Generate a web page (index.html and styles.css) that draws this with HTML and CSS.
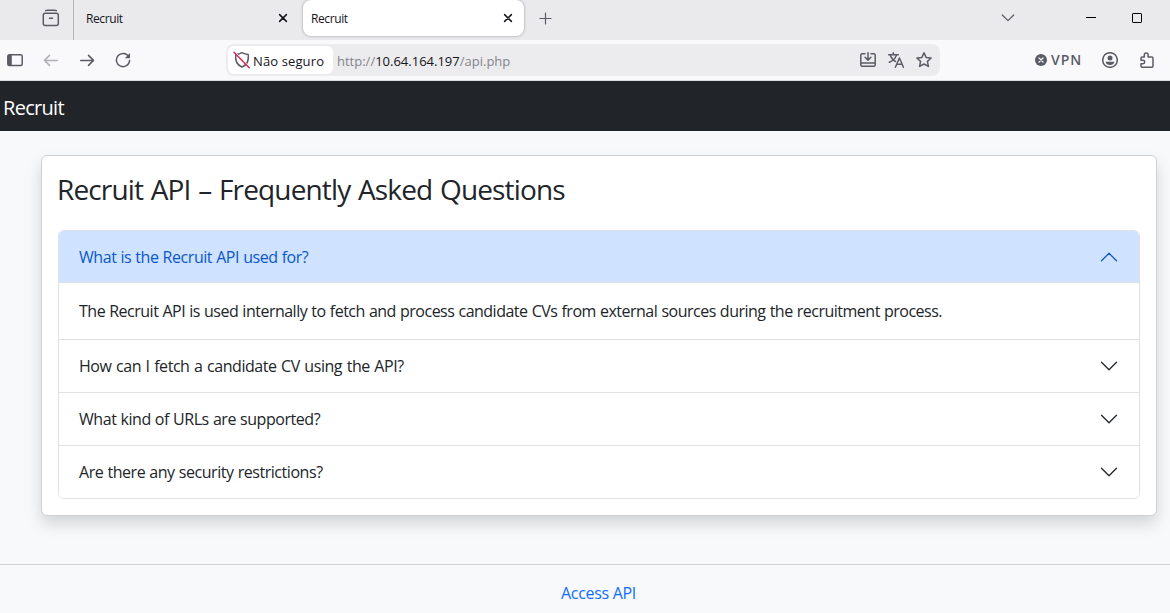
FILE: index.html
```html
<!DOCTYPE html>
<html lang="en">
<head>
    <meta charset="UTF-8">
    <meta name="viewport" content="width=device-width, initial-scale=1.0">
    <title>Recruit</title>
    <link rel="stylesheet" href="styles.css">
</head>
<body>
    <!-- tabs -->
    <div class="tabbar">
        <div class="tab-start">
            <svg class="icon" width="18" height="18" viewBox="0 0 18 18"><path d="M3.7 1.7Q4.5 1.2 5.5 1.2h7q1 0 1.8.5"/><rect x="1.3" y="4.2" width="15" height="12.3" rx="2"/><path d="M7.500 9.2h3"/></svg>
        </div>
        <div class="tab">
            <span class="tab-title">Recruit</span>
            <svg class="icon close" width="10" height="10" viewBox="0 0 10 10"><path d="M1.600 1.600l6.800 6.800M8.400 1.600L1.600 8.400"/></svg>
        </div>
        <div class="tab active">
            <span class="tab-title">Recruit</span>
            <svg class="icon close" width="10" height="10" viewBox="0 0 10 10"><path d="M1.600 1.600l6.800 6.800M8.400 1.600L1.600 8.400"/></svg>
        </div>
        <svg class="icon thin new-tab" width="13" height="13" viewBox="0 0 13 13"><path d="M6.5 1v11M1 6.5h11"/></svg>
        <div class="window-buttons">
            <svg class="icon thin" width="14" height="8" viewBox="0 0 14 8"><path d="M1.3 1L7 6.7 12.7 1"/></svg>
            <svg class="icon black minimize" width="10" height="10" viewBox="0 0 10 10"><path d="M0 4.5h10"/></svg>
            <svg class="icon black" width="10" height="10" viewBox="0 0 10 10"><rect x=".5" y=".5" width="9" height="9" rx=".6"/></svg>
        </div>
    </div>

    <!-- address bar -->
    <div class="toolbar">
        <div class="nav-buttons">
            <svg class="icon" width="16" height="16" viewBox="0 0 16 16"><rect x=".8" y="2.8" width="14.4" height="10.7" rx="1.5"/><path class="fill" d="M1 3h3.8v10.3H1z"/></svg>
            <svg class="icon faded" width="16" height="16" viewBox="0 0 16 16"><path d="M14.300 8.4H1.5M6.500 3.400l-5 5 5 5"/></svg>
            <svg class="icon" width="16" height="16" viewBox="0 0 16 16"><path d="M1.700 8.4h12.800M9.500 3.400l5 5-5 5"/></svg>
            <svg class="icon" width="16" height="16" viewBox="0 0 16 16"><path d="M13.7 4.7A6.6 6.6 0 1 0 14.6 8.5"/><path class="fill" d="M15 1v5.2H9.8z"/></svg>
        </div>
        <div class="urlbar">
            <div class="security">
                <svg class="icon" width="18" height="18" viewBox="0 0 18 18"><path d="M9 1.7Q11.500 3.300 15.200 3.500Q16.600 12.500 9 16.200Q1.400 12.500 2.800 3.500Q6.500 3.300 9 1.700z"/><path class="halo" d="M2 1l15 15.500"/><path class="slash" d="M1 1.2l15.200 15.5"/></svg>
                <span>Não seguro</span>
            </div>
            <div class="url">http://<b>10.64.164.197</b>/api.php</div>
            <div class="page-actions">
                <svg class="icon" width="16" height="16" viewBox="0 0 16 16"><path d="M5 1.7H2.3Q.8 1.700.8 3.2v9.600q0 1.500 1.500 1.500h11.400q1.500 0 1.500-1.500V3.200q0-1.500-1.500-1.500H11M.8 11h14.400M8 .7v7.300M5.100 5.300L8 8.200l2.900-2.900"/></svg>
                <svg class="icon" width="16" height="16" viewBox="0 0 16 16"><path d="M.7 2.7h9.600M5.200.8v1.900M8.500 2.9Q7 8 1.300 10.300M2.200 2.900Q4 7.700 7.500 9.500M7.400 15.200L11.400 6l4 9.200M8.700 12.300h5.500"/></svg>
                <svg class="icon" width="16" height="16" viewBox="0 0 16 16"><path d="M8 .8l2.100 4.600 5 .6-3.700 3.400 1 5L8 12l-4.400 2.400 1-5L.9 6l5-.6z"/></svg>
            </div>
        </div>
        <div class="extras">
            <svg class="icon" width="12" height="12" viewBox="0 0 12 12"><circle class="fill" cx="6" cy="6" r="6"/><path class="cross" d="M4 4l4 4M8 4L4 8"/></svg>
            <span class="vpn">VPN</span>
            <svg class="icon account" width="16" height="16" viewBox="0 0 16 16"><circle cx="8" cy="8" r="7.3"/><circle class="fill" cx="8" cy="6" r="2.5"/><path class="fill" d="M3.5 9.7h9Q11.6 13 8 13T3.5 9.7z"/></svg>
            <svg class="icon" width="16" height="16" viewBox="0 0 16 16"><path d="M5.300 5V2.800a1.900 1.900 0 0 1 3.800 0V5h3.700q1.200 0 1.200 1.200v7.800q0 1.200-1.200 1.200H3.200q-1.200 0-1.200-1.200v-2.300h2a1.700 1.700 0 0 0 0-3.400H2V6.200Q2 5 3.200 5z"/></svg>
        </div>
    </div>

    <nav class="navbar">
        <span class="navbar-brand">Recruit</span>
    </nav>

    <main class="container">
        <div class="card">
            <h3>Recruit API – Frequently Asked Questions</h3>
            <div class="accordion">
                <div class="accordion-item">
                    <button class="accordion-button open">
                        <span>What is the Recruit API used for?</span>
                        <svg class="arrow" width="20" height="20" viewBox="0 0 16 16"><path d="M2 11l6-6 6 6"/></svg>
                    </button>
                    <div class="accordion-body">The Recruit API is used internally to fetch and process candidate CVs from external sources during the recruitment process.</div>
                </div>
                <div class="accordion-item">
                    <button class="accordion-button">
                        <span class="wide">How can I fetch a candidate CV using the API?</span>
                        <svg class="arrow" width="20" height="20" viewBox="0 0 16 16"><path d="M2 5l6 6 6-6"/></svg>
                    </button>
                </div>
                <div class="accordion-item">
                    <button class="accordion-button">
                        <span>What kind of URLs are supported?</span>
                        <svg class="arrow" width="20" height="20" viewBox="0 0 16 16"><path d="M2 5l6 6 6-6"/></svg>
                    </button>
                </div>
                <div class="accordion-item">
                    <button class="accordion-button">
                        <span>Are there any security restrictions?</span>
                        <svg class="arrow" width="20" height="20" viewBox="0 0 16 16"><path d="M2 5l6 6 6-6"/></svg>
                    </button>
                </div>
            </div>
        </div>
    </main>

    <footer class="footer">
        <a href="#">Access API</a>
    </footer>
</body>
</html>
```
FILE: styles.css
```css
* {
    box-sizing: border-box;
}

body {
    margin: 0;
    height: 613px;
    overflow: hidden;
    font-family: "Segoe UI", "Open Sans", "Noto Sans", sans-serif;
    font-size: 16px;
    line-height: 24px;
    color: #212529;
    background-color: #f8f9fa;
}

svg {
    display: block;
    flex-shrink: 0;
}

.icon {
    fill: none;
    stroke: #5b5b66;
    stroke-width: 1.5;
    stroke-linecap: round;
    stroke-linejoin: round;
}

.icon .fill {
    fill: #5b5b66;
    stroke: none;
}

.icon.thin {
    stroke-width: 1.2;
}

.icon.close {
    stroke: #15141a;
    stroke-width: 1.5;
}

.icon.black {
    stroke: #000;
    stroke-width: 1;
    stroke-linecap: butt;
}

.icon.faded {
    opacity: 0.45;
}

.tabbar {
    display: flex;
    align-items: flex-start;
    height: 40px;
    background-color: #eaeaed;
}

.tab-start {
    width: 74px;
    height: 40px;
    padding: 9px 0 0 42px;
    border-right: 1px solid #b5b5ba;
}

.tab {
    display: flex;
    align-items: center;
    justify-content: space-between;
    width: 221px;
    height: 36px;
    padding: 0 11px 0 8px;
    margin-left: 4px;
    border-radius: 0 0 8px 8px;
    font-size: 12px;
    color: #15141a;
}

.tab.active {
    background-color: #fff;
    border-radius: 8px;
    box-shadow: 0 0 3px rgba(0, 0, 0, 0.35);
}

.tab-title {
    padding-top: 1px;
    letter-spacing: -0.4px;
}

.new-tab {
    margin: 12px 0 0 15px;
}

.window-buttons {
    display: flex;
    align-items: center;
    height: 36px;
    margin-left: auto;
    padding-right: 28px;
}

.minimize {
    margin: 0 36px 0 71px;
}

.toolbar {
    display: flex;
    align-items: center;
    height: 41px;
    padding: 0 15px 1px 7px;
    background-color: #f9f9fb;
    border-bottom: 1px solid #d8dadc;
}

.nav-buttons {
    display: flex;
    gap: 20px;
    width: 219px;
}

.urlbar {
    display: flex;
    align-items: center;
    width: 714px;
    height: 32px;
    padding: 2px;
    border-radius: 8px;
    background-color: #ececee;
    font-size: 13px;
}

.security {
    display: flex;
    align-items: center;
    gap: 2px;
    width: 105px;
    height: 28px;
    padding-left: 5px;
    border-radius: 6px;
    background-color: #fff;
    color: #15141a;
    letter-spacing: 0.12px;
    white-space: nowrap;
}

.security span {
    padding-top: 2px;
}

.security .halo {
    stroke: #fff;
    stroke-width: 1;
}

.security .slash {
    stroke: #e22850;
}

.url {
    margin-left: 4px;
    padding-top: 2px;
    color: #84848a;
}

.url b {
    font-weight: normal;
    color: #15141a;
}

.page-actions {
    display: flex;
    gap: 12px;
    margin-left: auto;
    padding-right: 6px;
}

.extras {
    display: flex;
    align-items: center;
    margin-left: auto;
}

.extras .cross {
    stroke: #f9f9fb;
    stroke-width: 1.3;
}

.vpn {
    width: 55px;
    padding-left: 4px;
    font-size: 14px;
    font-weight: 600;
    letter-spacing: 1px;
    color: #5b5b66;
}

.account {
    margin-right: 21px;
}

.navbar {
    display: flex;
    align-items: center;
    height: 50px;
    padding: 4px 3px 0;
    background-color: #212529;
}

.navbar-brand {
    font-size: 20px;
    line-height: 30px;
    color: #fff;
    letter-spacing: -0.7px;
}

.container {
    padding: 24px 13px 48px 41px;
}

.card {
    height: 361px;
    padding: 16px;
    background-color: #fff;
    border: 1px solid #cfd0d2;
    border-radius: 6px;
    box-shadow: 0 8px 16px rgba(0, 0, 0, 0.15);
}

h3 {
    margin: 0 0 24px -1px;
    font-size: 28px;
    font-weight: 400;
    line-height: 34px;
    letter-spacing: -0.85px;
    word-spacing: 1.2px;
}

.accordion {
    border: 1px solid #dee2e6;
    border-radius: 6px;
    overflow: hidden;
}

.accordion-item + .accordion-item {
    border-top: 1px solid #dee2e6;
}

.accordion-button {
    display: flex;
    align-items: center;
    justify-content: space-between;
    width: 100%;
    height: 52px;
    padding: 0 20px;
    border: 0;
    background-color: #fff;
    color: #212529;
    font: inherit;
    text-align: left;
    letter-spacing: -0.45px;
    word-spacing: 0.4px;
}

.accordion-button .wide {
    word-spacing: 0.85px;
}

.accordion-button.open {
    background-color: #cfe2ff;
    color: #0a58ca;
    border-bottom: 1px solid #dee2e6;
}

.arrow {
    fill: none;
    stroke: currentColor;
    stroke-width: 1;
    stroke-linecap: round;
    stroke-linejoin: round;
}

.accordion-body {
    height: 56px;
    padding: 16px 20px;
    letter-spacing: -0.5px;
    word-spacing: 0.45px;
    white-space: nowrap;
}

.footer {
    padding: 16px 0 0 27px;
    border-top: 1px solid #d0d2d4;
    text-align: center;
    letter-spacing: -0.3px;
}

.footer a {
    color: #0d6efd;
    text-decoration: none;
}
```
